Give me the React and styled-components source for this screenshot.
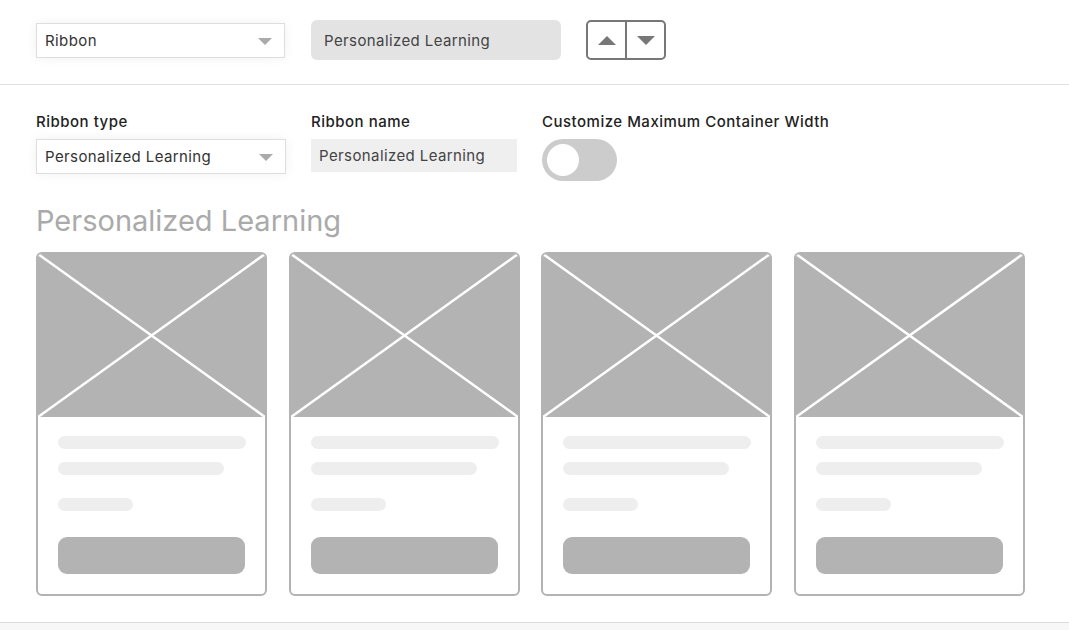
import React from 'react';
import styled, { createGlobalStyle } from 'styled-components';

const Global = createGlobalStyle`
    * { box-sizing: border-box; }
    body {
        margin: 0;
        background: #ffffff;
        font-family: 'Inter', 'Noto Sans', sans-serif;
        color: #333333;
    }
`;

export default function App() {
    return (
        <Page>
            <Global />
            <TopBar>
                <Select width="249px">
                    <span>Ribbon</span>
                    <Caret />
                </Select>
                <GrayField>Personalized Learning</GrayField>
                <Arrows>
                    <ArrowButton><Triangle up /></ArrowButton>
                    <ArrowButton><Triangle /></ArrowButton>
                </Arrows>
            </TopBar>
            <Settings>
                <Fields>
                    <Field width="250px">
                        <Label>Ribbon type</Label>
                        <Select width="250px">
                            <span>Personalized Learning</span>
                            <Caret />
                        </Select>
                    </Field>
                    <Field width="206px">
                        <Label>Ribbon name</Label>
                        <NameField>Personalized Learning</NameField>
                    </Field>
                    <Field>
                        <Label>Customize Maximum Container Width</Label>
                        <Toggle><Knob /></Toggle>
                    </Field>
                </Fields>
                <Heading>Personalized Learning</Heading>
                <Cards>
                    {[0, 1, 2, 3].map(i =>
                        <Card key={i}>
                            <Picture>
                                <svg width="100%" height="100%" viewBox="0 0 100 100" preserveAspectRatio="none">
                                    <line x1="0" y1="0" x2="100" y2="100" stroke="#fff" strokeWidth="2.5" vectorEffect="non-scaling-stroke" />
                                    <line x1="100" y1="0" x2="0" y2="100" stroke="#fff" strokeWidth="2.5" vectorEffect="non-scaling-stroke" />
                                </svg>
                            </Picture>
                            <Body>
                                <Bar width="188px" />
                                <Bar width="166px" top="13px" />
                                <Bar width="75px" top="23px" />
                                <Button />
                            </Body>
                        </Card>
                    )}
                </Cards>
            </Settings>
            <Footer />
        </Page>
    )
}

const Page = styled.div`
    width: 1069px;
    height: 630px;
    display: flex;
    flex-direction: column;
    overflow: hidden;
`;

const TopBar = styled.div`
    height: 85px;
    display: flex;
    align-items: center;
    gap: 26px;
    padding: 0 36px 4px 36px;
    border-bottom: 1px solid #e2e2e2;
`;

const Select = styled.div`
    width: ${props => props.width};
    height: 35px;
    background: #ffffff;
    border: 1px solid #dedede;
    box-shadow: 0 0 12px rgba(0,0,0,0.06);
    display: flex;
    align-items: center;
    justify-content: space-between;
    padding: 0 12px 0 8px;
    font-size: 15px;
    letter-spacing: 0.4px;
    color: #333333;
`;

const Caret = styled.div`
    width: 0;
    height: 0;
    border-left: 7px solid transparent;
    border-right: 7px solid transparent;
    border-top: 7px solid #aaaaaa;
    margin-top: 2px;
`;

const GrayField = styled.div`
    width: 250px;
    height: 40px;
    background: #e3e3e3;
    border-radius: 6px;
    display: flex;
    align-items: center;
    padding-left: 13px;
    font-size: 15px;
    letter-spacing: 0.4px;
    color: #444444;
`;

const Arrows = styled.div`
    display: flex;
    width: 80px;
    height: 40px;
    margin-left: -1px;
    border: 2px solid #777777;
    border-radius: 5px;
    overflow: hidden;
    background: #ffffff;
`;

const ArrowButton = styled.div`
    flex: 1;
    display: flex;
    align-items: center;
    justify-content: center;
    & + & { border-left: 2px solid #777777; }
`;

const Triangle = styled.div`
    width: 0;
    height: 0;
    border-left: 9px solid transparent;
    border-right: 9px solid transparent;
    ${props => props.up ? 'border-bottom: 9px solid #777777;' : 'border-top: 9px solid #777777;'}
`;

const Settings = styled.div`
    flex: 1;
    padding: 28px 36px 0 36px;
`;

const Fields = styled.div`
    display: flex;
    gap: 25px;
`;

const Field = styled.div`
    width: ${props => props.width || 'auto'};
    display: flex;
    flex-direction: column;
    gap: 8px;
`;

const Label = styled.div`
    font-size: 15px;
    font-weight: 500;
    letter-spacing: 0.5px;
    color: #222222;
    line-height: 18px;
`;

const NameField = styled.div`
    height: 33px;
    background: #efefef;
    display: flex;
    align-items: center;
    padding-left: 8px;
    font-size: 15px;
    letter-spacing: 0.4px;
    color: #444444;
`;

const Toggle = styled.div`
    width: 75px;
    height: 42px;
    border-radius: 21px;
    background: #cccccc;
    display: flex;
    align-items: center;
    padding-left: 5px;
`;

const Knob = styled.div`
    width: 32px;
    height: 32px;
    border-radius: 50%;
    background: #ffffff;
`;

const Heading = styled.div`
    margin-top: 23px;
    font-size: 29px;
    color: #aaaaaa;
    line-height: 34px;
`;

const Cards = styled.div`
    margin-top: 14px;
    display: flex;
    gap: 21.5px;
`;

const Card = styled.div`
    width: 231px;
    height: 344px;
    border: 2px solid #b3b3b3;
    border-radius: 6px;
    overflow: hidden;
    display: flex;
    flex-direction: column;
`;

const Picture = styled.div`
    height: 163px;
    background: #b3b3b3;
    svg { display: block; }
`;

const Body = styled.div`
    flex: 1;
    padding: 19px 20px 0 20px;
    display: flex;
    flex-direction: column;
`;

const Bar = styled.div`
    width: ${props => props.width};
    height: 13px;
    border-radius: 7px;
    background: #eeeeee;
    margin-top: ${props => props.top || '0'};
`;

const Button = styled.div`
    margin-top: 26px;
    height: 37px;
    border-radius: 9px;
    background: #b3b3b3;
`;

const Footer = styled.div`
    height: 8px;
    border-top: 1px solid #dddddd;
    background: #f7f7f7;
`;
